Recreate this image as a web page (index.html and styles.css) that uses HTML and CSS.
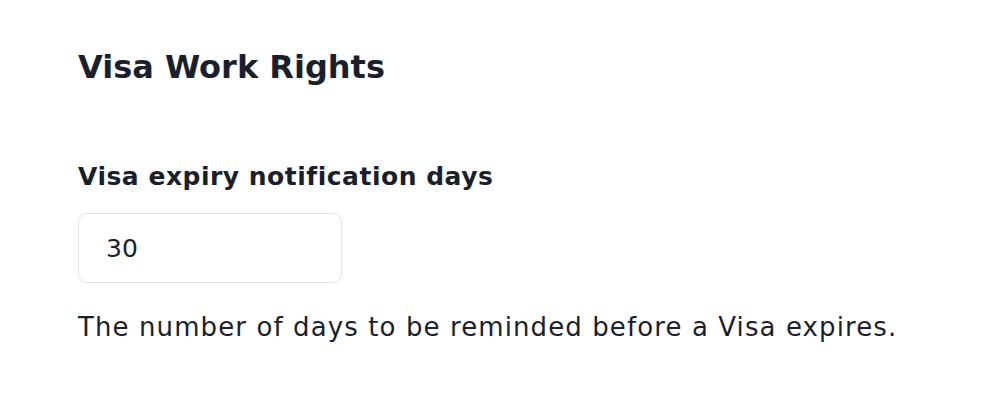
FILE: index.html
```html
<!DOCTYPE html>
<html lang="en">
<head>
<meta charset="utf-8">
<title>Visa Work Rights</title>
<link rel="stylesheet" href="styles.css">
</head>
<body>
<main class="page">
  <h1 class="title">Visa Work Rights</h1>
  <section class="field">
    <label class="field-label" for="days">Visa expiry notification days</label>
    <input class="field-input" id="days" type="text" value="30">
    <p class="field-help">The number of days to be reminded before a Visa expires.</p>
  </section>
</main>
</body>
</html>
```

FILE: styles.css
```css
html, body {
  margin: 0;
  padding: 0;
  background: #ffffff;
}

.page {
  padding: 47px 0 0 78px;
  font-family: "DejaVu Sans", Inter, sans-serif;
  color: #1b1f2c;
}

.title {
  margin: 0;
  font-size: 32px;
  line-height: 40px;
  font-weight: 700;
}

.field {
  margin-top: 74px;
  display: flex;
  flex-direction: column;
  align-items: flex-start;
}

.field-label {
  font-size: 25px;
  line-height: 32px;
  font-weight: 700;
  letter-spacing: 0.5px;
}

.field-input {
  margin-top: 20px;
  box-sizing: border-box;
  width: 264px;
  height: 70px;
  padding: 0 27px;
  border: 1px solid #e2e2e4;
  border-radius: 9px;
  font-family: inherit;
  font-size: 25px;
  color: #1b1f2c;
  outline: none;
}

.field-help {
  margin: 28px 0 0;
  font-size: 26px;
  line-height: 32px;
  font-weight: 400;
  letter-spacing: 1.1px;
}
```
